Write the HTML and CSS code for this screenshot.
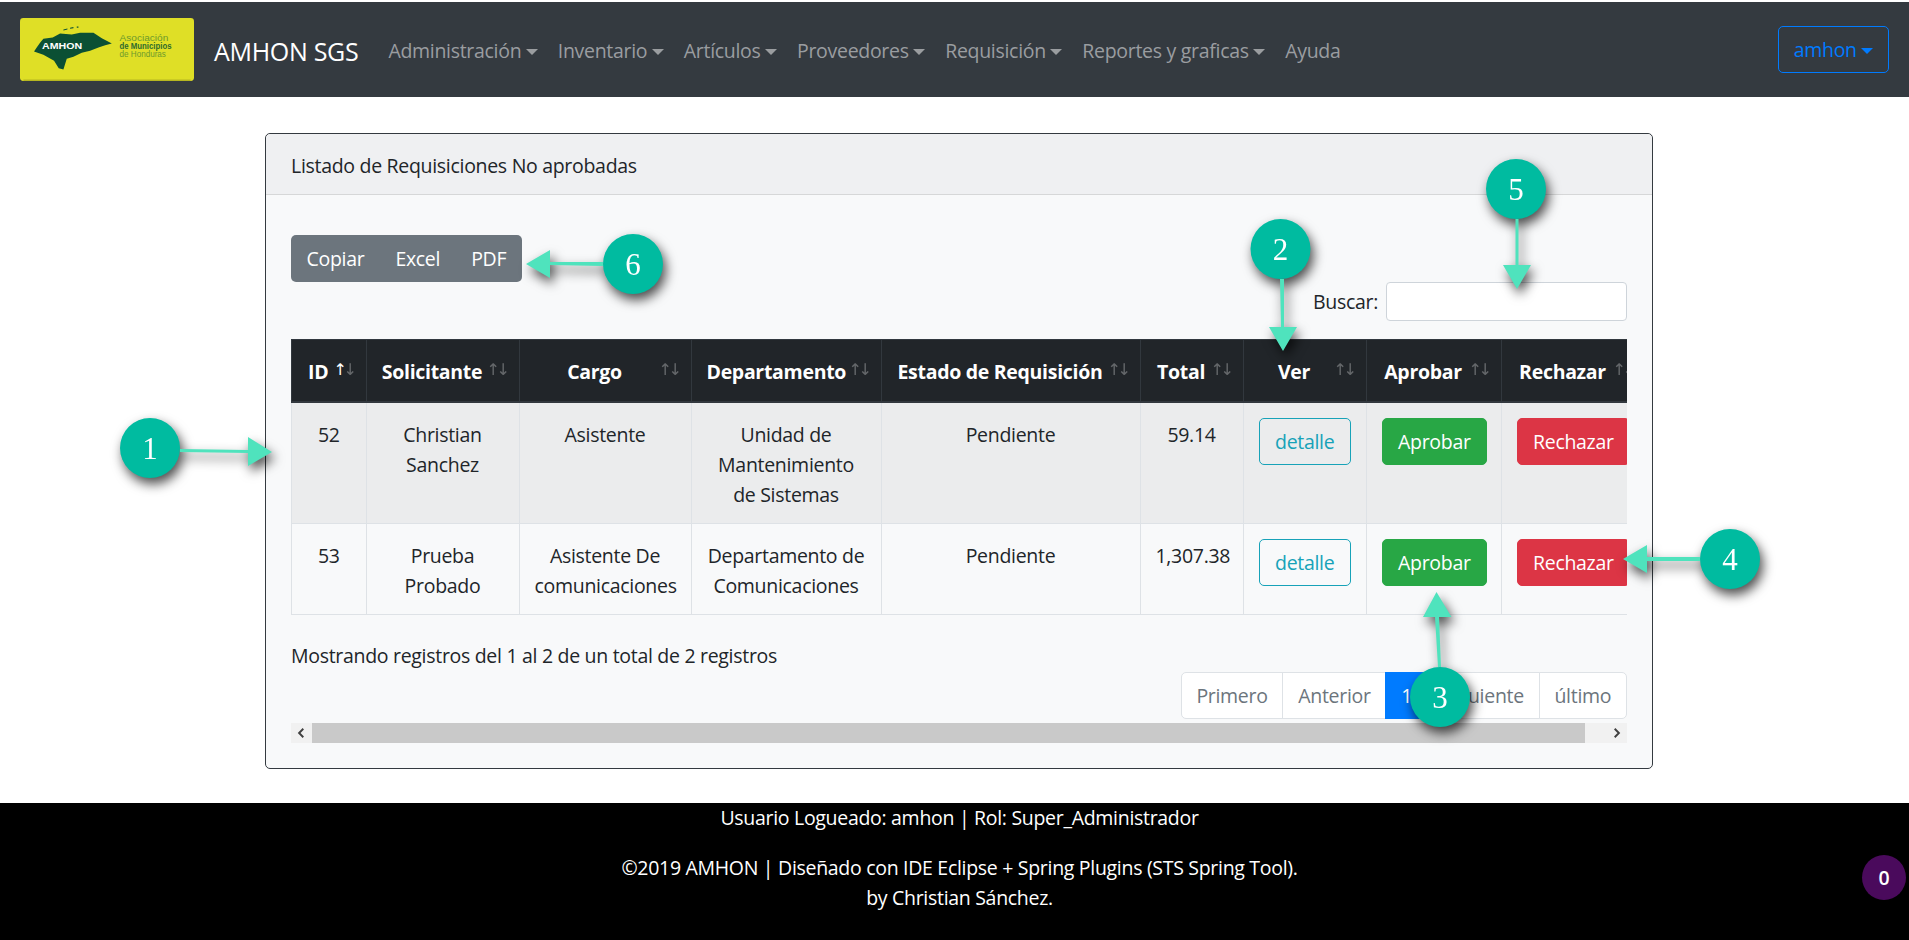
FILE: index.html
```html
<!DOCTYPE html>
<html lang="es">
<head>
    <meta charset="UTF-8">
    <title>AMHON SGS</title>
    <link rel="stylesheet" href="styles.css">
</head>
<body>
    <nav class="navbar">
        <svg class="logo" viewBox="30 24 521 188">
            <rect x="30" y="24" width="521" height="188" rx="10" fill="#dfdf26"/>
            <rect x="40" y="208" width="501" height="4" fill="#b2b220"/>
            <path d="M72 124 L80 112 L90 98 L100 86 L128 82 L150 70 L185 73 L210 68 L250 68 L275 84 L305 100 L285 105 L265 112 L240 122 L215 128 L190 140 L170 146 L160 178 L146 174 L132 152 L100 134 Z" fill="#0b5034"/>
            <path d="M160 58 L172 55 L172 58 L160 61 Z M180 53 L190 51 L190 54 L180 56 Z M200 49 L205 49 L205 53 L200 53 Z" fill="#0b5034"/>
            <text class="logo-amhon" x="96" y="118" textLength="120" lengthAdjust="spacingAndGlyphs">AMHON</text>
            <text class="logo-line" x="328" y="92" textLength="146" lengthAdjust="spacingAndGlyphs">Asociación</text>
            <text class="logo-line logo-bold" x="328" y="116" textLength="156" lengthAdjust="spacingAndGlyphs">de Municipios</text>
            <text class="logo-line" x="328" y="141" textLength="139" lengthAdjust="spacingAndGlyphs">de Honduras</text>
        </svg>
        <a class="brand">AMHON SGS</a>
        <ul class="nav-links">
            <li class="caret">Administración</li>
            <li class="caret">Inventario</li>
            <li class="caret">Artículos</li>
            <li class="caret">Proveedores</li>
            <li class="caret">Requisición</li>
            <li class="caret">Reportes y graficas</li>
            <li>Ayuda</li>
        </ul>
        <button class="user-btn caret">amhon</button>
    </nav>

    <main class="content">
        <section class="card">
            <div class="card-header">Listado de Requisiciones No aprobadas</div>
            <div class="card-body">
                <div class="dt-top">
                    <div class="btn-group">
                        <button>Copiar</button>
                        <button>Excel</button>
                        <button>PDF</button>
                    </div>
                    <label class="search">Buscar: <input type="text"></label>
                </div>
                <div class="table-clip">
                    <table class="dt">
                        <colgroup>
                            <col class="c-id"><col class="c-sol"><col class="c-car"><col class="c-dep"><col class="c-est">
                            <col class="c-tot"><col class="c-ver"><col class="c-apr"><col class="c-rec">
                        </colgroup>
                        <thead>
                            <tr>
                                <th class="sort-asc">ID</th>
                                <th>Solicitante</th>
                                <th>Cargo</th>
                                <th>Departamento</th>
                                <th>Estado de Requisición</th>
                                <th>Total</th>
                                <th>Ver</th>
                                <th>Aprobar</th>
                                <th>Rechazar</th>
                            </tr>
                        </thead>
                        <tbody>
                            <tr class="odd">
                                <td>52</td>
                                <td>Christian Sanchez</td>
                                <td>Asistente</td>
                                <td>Unidad de Mantenimiento de Sistemas</td>
                                <td>Pendiente</td>
                                <td>59.14</td>
                                <td><a class="btn btn-info">detalle</a></td>
                                <td><a class="btn btn-green">Aprobar</a></td>
                                <td><a class="btn btn-red">Rechazar</a></td>
                            </tr>
                            <tr>
                                <td>53</td>
                                <td>Prueba Probado</td>
                                <td>Asistente De comunicaciones</td>
                                <td>Departamento de Comunicaciones</td>
                                <td>Pendiente</td>
                                <td>1,307.38</td>
                                <td><a class="btn btn-info">detalle</a></td>
                                <td><a class="btn btn-green">Aprobar</a></td>
                                <td><a class="btn btn-red">Rechazar</a></td>
                            </tr>
                        </tbody>
                    </table>
                </div>
                <div class="dt-info">Mostrando registros del 1 al 2 de un total de 2 registros</div>
                <ul class="pagination">
                    <li>Primero</li>
                    <li>Anterior</li>
                    <li class="active">1</li>
                    <li>Siguiente</li>
                    <li>último</li>
                </ul>
                <div class="scrollbar">
                    <svg class="scroll-arrow" viewBox="0 0 10 10"><path d="M6.5 1.5 L3 5 L6.5 8.5" /></svg>
                    <div class="scroll-thumb"></div>
                    <svg class="scroll-arrow" viewBox="0 0 10 10"><path d="M3.5 1.5 L7 5 L3.5 8.5" /></svg>
                </div>
            </div>
        </section>
    </main>

    <footer class="footer">
        <p>Usuario Logueado: amhon | Rol: Super_Administrador</p>
        <p>©2019 AMHON | Diseñado con IDE Eclipse + Spring Plugins (STS Spring Tool).<br>by Christian Sánchez.</p>
        <span class="badge">0</span>
    </footer>

    <!-- numeros y flechas puestos encima de la captura -->
    <svg class="marks" viewBox="0 0 1909 940">
        <g class="mark">
            <path d="M180 449 L248 450 L248 437 L272 452 L248 466 L248 453 L180 452 Z"/>
            <circle cx="150" cy="448" r="30"/>
            <text x="150" y="459">1</text>
        </g>
        <g class="mark">
            <path d="M1280 279 L1284 279 L1284 327 L1297 327 L1283 351 L1269 327 L1281 327 Z"/>
            <circle cx="1280.5" cy="249" r="30"/>
            <text x="1280.5" y="260">2</text>
        </g>
        <g class="mark">
            <path d="M1438 667 L1441 667 L1439 617 L1451.5 617 L1436.5 592 L1423 617 L1435 617 Z"/>
            <circle cx="1440" cy="697" r="30"/>
            <text x="1440" y="708">3</text>
        </g>
        <g class="mark">
            <path d="M1700 557 L1700 561 L1647 561 L1647 573 L1623 559 L1647 545 L1647 557 Z"/>
            <circle cx="1730" cy="559" r="30"/>
            <text x="1730" y="570">4</text>
        </g>
        <g class="mark">
            <path d="M1515.5 219 L1518.5 219 L1518.5 265 L1531 265 L1517 289 L1503 265 L1515.5 265 Z"/>
            <circle cx="1516" cy="189" r="30"/>
            <text x="1516" y="200">5</text>
        </g>
        <g class="mark">
            <path d="M603 262 L603 266 L550 265 L550 278 L526 264 L550 250 L550 262 Z"/>
            <circle cx="633" cy="264" r="30"/>
            <text x="633" y="275">6</text>
        </g>
    </svg>
</body>
</html>
```

FILE: styles.css
```css
* {
    box-sizing: border-box;
}

body {
    margin: 0;
    padding-top: 2px;
    height: 940px;
    overflow: hidden;
    position: relative;
    background: white;
    color: #212529;
    font-family: "Open Sans", "Noto Sans", sans-serif;
    font-size: 19.5px;
    line-height: 30px;
    letter-spacing: -0.3px;
}

ul {
    list-style: none;
    margin: 0;
    padding: 0;
}

button {
    font: inherit;
    letter-spacing: inherit;
}

/* navbar */
.navbar {
    height: 95px;
    background: #343a40;
    display: flex;
    align-items: center;
    padding: 0 20px;
}

.logo {
    width: 174px;
    height: 63px;
    flex: none;
}

.logo-amhon {
    font-family: "Liberation Sans", sans-serif;
    font-size: 29px;
    font-weight: bold;
    fill: white;
    letter-spacing: 0;
}

.logo-line {
    font-family: "Liberation Sans", sans-serif;
    font-size: 27px;
    fill: #6d9a2c;
    letter-spacing: 0;
}

.logo-bold {
    font-weight: bold;
    fill: #2f6b2e;
}

.brand {
    color: white;
    font-size: 25px;
    margin-left: 20px;
    margin-right: 20px;
    position: relative;
    top: 1px;
}

.nav-links {
    display: flex;
    flex: 1;
    color: #9a9da0;
    position: relative;
    top: 1px;
}

.nav-links li {
    padding: 0 10px;
}

.caret::after {
    content: "";
    display: inline-block;
    margin-left: 4.5px;
    vertical-align: 3px;
    border-top: 6px solid;
    border-left: 6px solid transparent;
    border-right: 6px solid transparent;
}

.user-btn {
    width: 111px;
    height: 47px;
    background: transparent;
    color: #007bff;
    border: 1px solid #007bff;
    border-radius: 5px;
    padding: 0;
}

/* tarjeta */
.content {
    padding: 36px 256px 34px 265px;
}

.card {
    border: 1px solid #343a40;
    border-radius: 5px;
    background: #f8f9fa;
    height: 636px;
}

.card-header {
    height: 61px;
    padding: 17px 25px 0;
    background: #eff0f2;
    border-bottom: 1px solid #d6d7d8;
    border-radius: 5px 5px 0 0;
}

.card-body {
    padding: 0 25px 24px;
}

.dt-top {
    display: flex;
    justify-content: space-between;
    align-items: flex-start;
    padding-top: 40px;
    margin-bottom: 18px;
}

.btn-group {
    display: flex;
    height: 47px;
    background: #6c757d;
    border-radius: 5px;
}

.btn-group button {
    background: transparent;
    border: none;
    color: white;
    padding: 0 15.5px;
}

.search {
    display: flex;
    align-items: center;
    gap: 8px;
    margin-top: 47px;
}

.search input {
    width: 241px;
    height: 39px;
    border: 1px solid #ced4da;
    border-radius: 4px;
    background: white;
}

/* tabla */
.table-clip {
    overflow: hidden;
}

.dt {
    border-collapse: collapse;
    table-layout: fixed;
    width: 1353px;
    text-align: center;
}

.c-id { width: 74.5px; }
.c-sol { width: 153px; }
.c-car { width: 172px; }
.c-dep { width: 190px; }
.c-est { width: 259px; }
.c-tot { width: 103px; }
.c-ver { width: 123px; }
.c-apr { width: 135px; }
.c-rec { width: 144px; }

.dt th {
    position: relative;
    height: 62px;
    padding: 4px 36px 0 15px;
    background: #212529;
    color: white;
    border: 1px solid #32383e;
    border-bottom-width: 2px;
    white-space: nowrap;
}

.dt th::before,
.dt th::after {
    position: absolute;
    top: 20px;
    font-family: "DejaVu Sans", sans-serif;
    font-size: 16px;
    font-weight: normal;
    line-height: 20px;
    opacity: 0.3;
}

.dt th::before {
    content: "↑";
    right: 19px;
}

.dt th::after {
    content: "↓";
    right: 9px;
}

.dt th.sort-asc::before {
    opacity: 1;
}

.dt td {
    padding: 17px 15px 13px;
    vertical-align: top;
    border: 1px solid #dee2e6;
}

.dt tr.odd td {
    background: #ebeced;
}

.dt td:nth-child(n+7) {
    padding-top: 15px;
    padding-bottom: 0;
}

.btn {
    display: inline-block;
    height: 47px;
    line-height: 45px;
    padding: 0 15.5px;
    border: 1px solid;
    border-radius: 5px;
    white-space: nowrap;
}

.btn-info {
    color: #17a2b8;
    border-color: #17a2b8;
}

.btn-green {
    color: white;
    background: #28a745;
    border-color: #28a745;
}

.btn-red {
    color: white;
    background: #dc3545;
    border-color: #dc3545;
}

.dt-info {
    margin-top: 26px;
}

.pagination {
    display: flex;
    justify-content: flex-end;
    margin-top: 1px;
}

.pagination li {
    height: 47px;
    line-height: 45px;
    padding: 0 14.8px;
    color: #6c757d;
    background: white;
    border: 1px solid #dee2e6;
    margin-left: -1px;
}

.pagination li:first-child {
    border-radius: 5px 0 0 5px;
}

.pagination li:last-child {
    border-radius: 0 5px 5px 0;
}

.pagination li.active {
    color: white;
    background: #007bff;
    border-color: #007bff;
}

.scrollbar {
    display: flex;
    height: 20px;
    margin-top: 4px;
    background: #f1f1f1;
}

.scroll-arrow {
    width: 21px;
    height: 20px;
    flex: none;
    padding: 4px;
}

.scroll-arrow path {
    fill: none;
    stroke: #404040;
    stroke-width: 1.6;
}

.scroll-thumb {
    flex: 1;
    background: #c9c9c9;
    margin-right: 21px;
}

/* pie */
.footer {
    position: relative;
    height: 137px;
    padding-left: 10px;
    background: black;
    color: white;
    text-align: center;
}

.footer p {
    margin: 0 0 20px;
}

.badge {
    position: absolute;
    top: 52px;
    right: 3px;
    width: 44px;
    height: 45px;
    line-height: 45px;
    border-radius: 50%;
    background: #4a0a5c;
    font-weight: 600;
}

/* marcas encima */
.marks {
    position: absolute;
    top: 0;
    left: 0;
    width: 1909px;
    height: 940px;
    pointer-events: none;
}

.mark {
    filter: drop-shadow(3px 6px 6px rgba(0, 0, 0, 0.7));
}

.mark path {
    fill: #4fe3bd;
}

.mark circle {
    fill: #00bba0;
}

.mark text {
    font-family: "Liberation Serif", serif;
    font-size: 31px;
    fill: white;
    text-anchor: middle;
    letter-spacing: 0;
}
```
